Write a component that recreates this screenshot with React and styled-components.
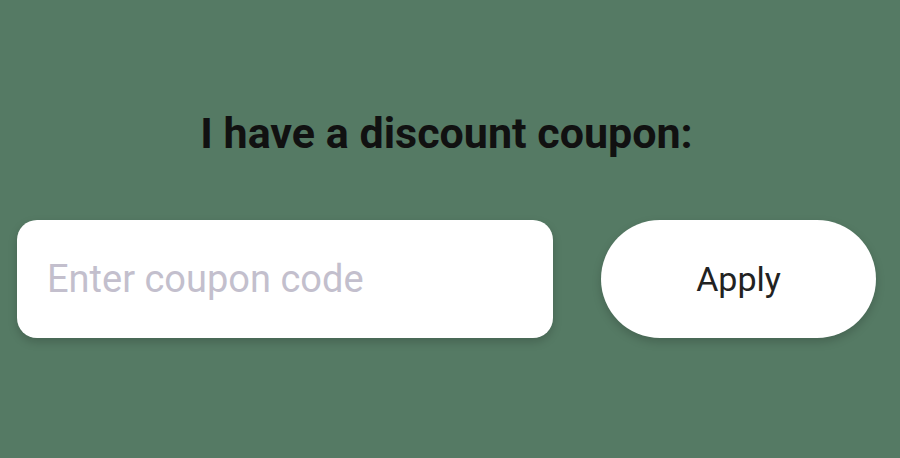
import styled, { createGlobalStyle } from "styled-components"

const Global = createGlobalStyle`
  html, body {
    margin: 0;
    padding: 0;
    background: #557a64;
    font-family: Roboto, "Liberation Sans", sans-serif;
  }
`

function App() {
  return (
    <>
      <Global />
      <Wrapper>
        <Title>I have a discount coupon:</Title>
        <Row>
          <CouponInput type="text" placeholder="Enter coupon code" />
          <ApplyButton>Apply</ApplyButton>
        </Row>
      </Wrapper>
    </>
  )
}

export default App

const Wrapper = styled.div`
  width: 900px;
  height: 458px;
  box-sizing: border-box;
  padding: 105px 24px 0 17px;
  display: flex;
  flex-direction: column;
  align-items: center;
`

const Title = styled.h2`
  margin: 0 0 59px;
  font-size: 43px;
  font-weight: 700;
  color: #111;
  line-height: 56px;
`

const Row = styled.div`
  width: 100%;
  display: flex;
  gap: 48px;
`

const CouponInput = styled.input`
  width: 536px;
  height: 118px;
  box-sizing: border-box;
  border: none;
  outline: none;
  border-radius: 20px;
  background: #fff;
  padding: 0 30px;
  font-family: Roboto, "Liberation Sans", sans-serif;
  font-size: 38px;
  color: #222;
  box-shadow: 0 4px 10px rgba(0, 0, 0, 0.18);

  &::placeholder {
    color: #c3bfcd;
  }
`

const ApplyButton = styled.button`
  flex: 1;
  height: 118px;
  border: none;
  border-radius: 59px;
  background: #fff;
  font-family: Roboto, "Liberation Sans", sans-serif;
  font-size: 34px;
  color: #222;
  cursor: pointer;
  box-shadow: 0 4px 10px rgba(0, 0, 0, 0.18);
`
